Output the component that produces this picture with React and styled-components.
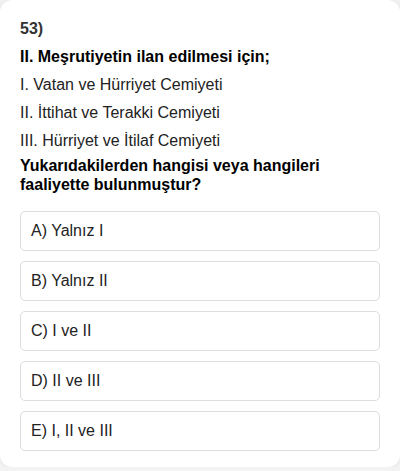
import React from "react";
import styled, { createGlobalStyle } from "styled-components";

const Global = createGlobalStyle`
  html, body {
    margin: 0;
    padding: 0;
    background: #f3f3f3;
  }
  body {
    font-family: "Liberation Sans", Arial, sans-serif;
  }
`;

const Card = styled.div`
  box-sizing: border-box;
  width: 400px;
  height: 467px;
  background: #fff;
  border-radius: 12px;
  box-shadow: 0 0 5px rgba(0, 0, 0, 0.08);
  padding: 20px 20px 16px;
  display: flex;
  flex-direction: column;
`;

const Number = styled.div`
  font-size: 16px;
  font-weight: bold;
  line-height: 18px;
  color: #333;
  margin-bottom: 10px;
`;

const Title = styled.div`
  font-size: 16px;
  font-weight: bold;
  line-height: 18px;
  color: #000;
  margin-bottom: 10px;
`;

const Items = styled.div`
  display: flex;
  flex-direction: column;
  gap: 10px;
`;

const Item = styled.div`
  font-size: 16px;
  line-height: 18px;
  color: #222;
`;

const Question = styled.div`
  font-size: 16px;
  font-weight: bold;
  line-height: 19px;
  color: #000;
  margin-top: 6px;
  margin-bottom: 17px;
`;

const Options = styled.div`
  display: flex;
  flex-direction: column;
  gap: 10px;
`;

const Option = styled.div`
  box-sizing: border-box;
  height: 40px;
  border: 1px solid #ddd;
  border-radius: 5px;
  padding: 0 10px;
  display: flex;
  align-items: center;
  font-size: 16px;
  color: #222;
  background: #fff;
`;

const items = [
  "I. Vatan ve Hürriyet Cemiyeti",
  "II. İttihat ve Terakki Cemiyeti",
  "III. Hürriyet ve İtilaf Cemiyeti",
];

const options = [
  "A) Yalnız I",
  "B) Yalnız II",
  "C) I ve II",
  "D) II ve III",
  "E) I, II ve III",
];

export default function App() {
  return (
    <>
      <Global />
      <Card>
        <Number>53)</Number>
        <Title>II. Meşrutiyetin ilan edilmesi için;</Title>
        <Items>
          {items.map((t) => (
            <Item key={t}>{t}</Item>
          ))}
        </Items>
        <Question>
          Yukarıdakilerden hangisi veya hangileri
          <br />
          faaliyette bulunmuştur?
        </Question>
        <Options>
          {options.map((o) => (
            <Option key={o}>{o}</Option>
          ))}
        </Options>
      </Card>
    </>
  );
}
